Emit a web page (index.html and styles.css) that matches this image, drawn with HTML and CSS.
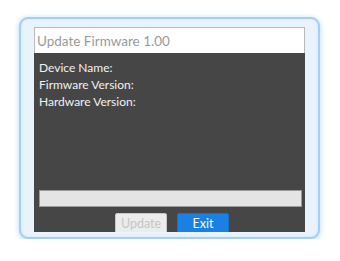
FILE: index.html
```html
<!DOCTYPE html>
<html lang="en">
<head>
  <meta charset="UTF-8">
  <title>Update Firmware</title>
  <link rel="stylesheet" href="styles.css">
</head>
<body>

  <div class="frame">
    <div class="window">
      <div class="title">Update Firmware 1.00</div>
      <div class="panel">
        <div class="info">
          <div>Device Name:</div>
          <div>Firmware Version:</div>
          <div>Hardware Version:</div>
        </div>
        <div class="progress"></div>
        <div class="buttons">
          <button class="btn update" disabled>Update</button>
          <button class="btn exit">Exit</button>
        </div>
      </div>
    </div>
  </div>

</body>
</html>
```

FILE: styles.css
```css
html {
  box-sizing: border-box;
  background: #fff;
}

*, *:before, *:after {
  box-sizing: inherit;
}

body {
  margin: 0;
  padding: 17px 0 0 19px;
  font-family: Lato, "Liberation Sans", sans-serif;
}

.frame {
  width: 301px;
  height: 222px;
  padding: 8px 13px 0 13px;
  border: 2px solid #a4cff3;
  border-radius: 9px;
  background: #e8f3fd;
  box-shadow: 0 1px 5px 1px #c6e2f9, inset 0 0 3px #cfe6fa;
}

.window {
  width: 271px;
  height: 205px;
  overflow: hidden;
  display: flex;
  flex-direction: column;
}

.title {
  height: 26px;
  background: #fff;
  border: 1px solid #b9b9b9;
  border-bottom: none;
  color: #9a9a9a;
  font-size: 13.5px;
  line-height: 26px;
  padding-left: 2px;
}

.panel {
  flex: 1;
  background: #464646;
  padding: 6px 3px 0 5px;
  display: flex;
  flex-direction: column;
}

.info {
  color: #f2f2f2;
  font-size: 12px;
  line-height: 17px;
  height: 131px;
}

.progress {
  height: 17px;
  background: #e4e4e4;
  border: 1px solid #9a9a9a;
}

.buttons {
  display: flex;
  justify-content: center;
  gap: 10px;
  padding-top: 6px;
  padding-left: 3px;
}

.btn {
  width: 52px;
  height: 21px;
  border-radius: 2px;
  font-family: Lato, "Liberation Sans", sans-serif;
  font-size: 12.5px;
  padding: 0;
  line-height: 19px;
}

.update {
  background: #ececec;
  border: 1px solid #c8c8c8;
  color: #c6c6c6;
}

.exit {
  background: #1a80e4;
  border: 1px solid #1670cc;
  color: #fff;
}
```
